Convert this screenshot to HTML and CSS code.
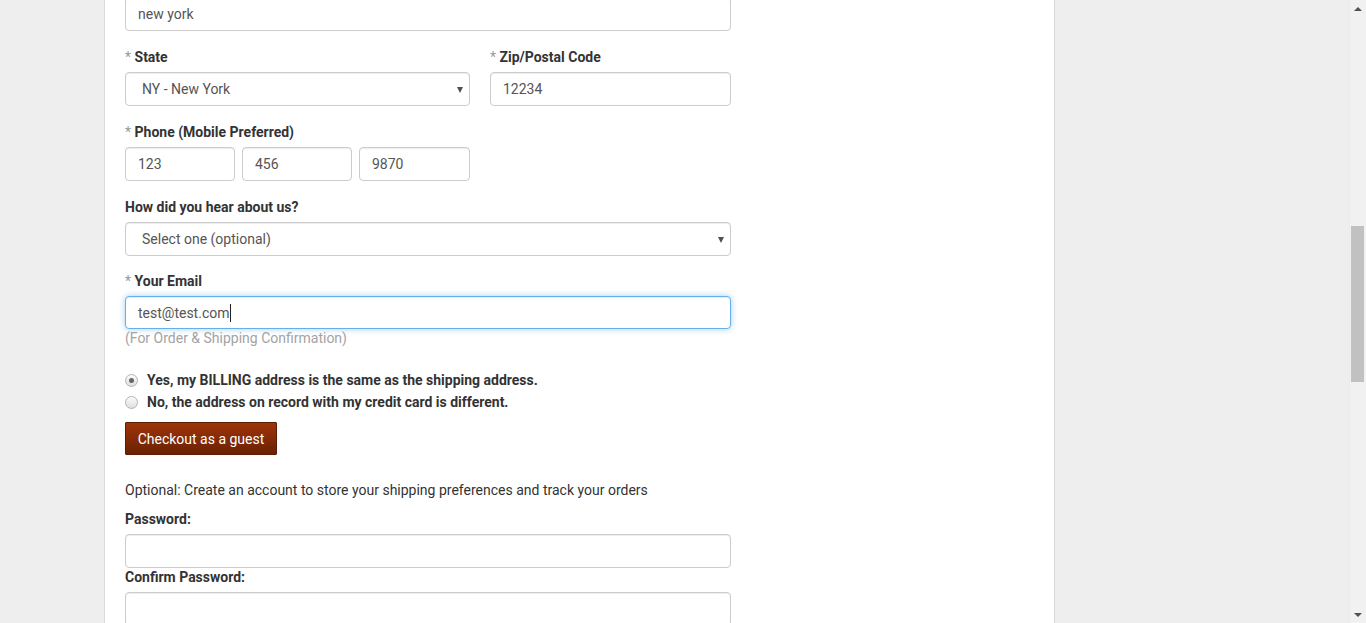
FILE: index.html
```html
<!DOCTYPE html>
<html lang="en">
<head>
<meta charset="utf-8">
<title>Checkout</title>
<link rel="stylesheet" href="styles.css">
</head>
<body>
<div class="viewport">
  <div class="sheet">
    <form class="form">
      <div class="group group-first">
        <input class="field" type="text" value="new york">
      </div>

      <div class="row2">
        <div class="group">
          <label class="label"><span class="req">*</span> State</label>
          <div class="select-wrap">
            <select class="field select"><option>NY - New York</option></select>
          </div>
        </div>
        <div class="group">
          <label class="label"><span class="req">*</span> Zip/Postal Code</label>
          <input class="field" type="text" value="12234">
        </div>
      </div>

      <div class="group">
        <label class="label"><span class="req">*</span> Phone (Mobile Preferred)</label>
        <div class="phone">
          <input class="field" type="text" value="123">
          <input class="field" type="text" value="456">
          <input class="field" type="text" value="9870">
        </div>
      </div>

      <div class="group group-tight">
        <label class="label">How did you hear about us?</label>
        <div class="select-wrap">
          <select class="field select"><option>Select one (optional)</option></select>
        </div>
      </div>

      <div class="group group-email">
        <label class="label"><span class="req">*</span> Your Email</label>
        <div class="field field-focus"><span class="value">test@test.com</span><span class="caret"></span></div>
        <span class="help">(For Order &amp; Shipping Confirmation)</span>
      </div>

      <div class="radios">
        <label class="radio"><input type="radio" name="billing" checked><span>Yes, my BILLING address is the same as the shipping address.</span></label>
        <label class="radio"><input type="radio" name="billing"><span>No, the address on record with my credit card is different.</span></label>
      </div>

      <div class="actions">
        <button type="button" class="btn">Checkout as a guest</button>
      </div>

      <p class="optional">Optional: Create an account to store your shipping preferences and track your orders</p>

      <div class="group group-pw">
        <label class="label">Password:</label>
        <input class="field" type="password">
      </div>
      <div class="group group-pw2">
        <label class="label">Confirm Password:</label>
        <input class="field" type="password">
      </div>
    </form>
  </div>
</div>
<div class="scrollbar">
  <div class="sb-arrow sb-up"></div>
  <div class="sb-track"><div class="sb-thumb"></div></div>
  <div class="sb-arrow sb-down"></div>
</div>
</body>
</html>
```

FILE: styles.css
```css
* { box-sizing: border-box; }

html, body {
  margin: 0;
  height: 623px;
  overflow: hidden;
}

body {
  display: flex;
  background: #eeeeee;
  font-family: Roboto, "Liberation Sans", sans-serif;
  font-size: 14px;
  line-height: 20px;
  color: #333;
}

.viewport {
  flex: 1;
  overflow: hidden;
}

.sheet {
  margin-left: 104px;
  width: 951px;
  height: 700px;
  background: #fff;
  border-left: 1px solid #d9d9d9;
  border-right: 1px solid #d9d9d9;
  padding-left: 20px;
}

.form {
  width: 606px;
  display: flex;
  flex-direction: column;
}

.group {
  display: flex;
  flex-direction: column;
  margin-bottom: 16px;
}

.group-first { margin-top: -3px; }
.group-tight { margin-bottom: 15px; }
.group-email { margin-bottom: 0; }
.group-pw { margin-top: 9px; margin-bottom: 0; }
.group-pw2 { margin-bottom: 0; margin-top: -1px; }

.label {
  font-weight: 700;
  color: #333;
  margin-bottom: 5px;
  line-height: 20px;
}

.req {
  color: #999;
  font-weight: 400;
}

.field {
  display: block;
  width: 100%;
  height: 34px;
  padding: 6px 12px;
  font-family: Roboto, "Liberation Sans", sans-serif;
  font-size: 14px;
  line-height: 20px;
  color: #555;
  background: #fff;
  border: 1px solid #ccc;
  border-radius: 4px;
  box-shadow: inset 0 1px 1px rgba(0, 0, 0, .075);
  outline: none;
  margin: 0;
}

.field-focus {
  display: flex;
  align-items: center;
  height: 33px;
  border-color: #66afe9;
  box-shadow: inset 0 1px 1px rgba(0, 0, 0, .075), 0 0 6px rgba(102, 175, 233, .6);
}

.value { color: #555; }

.caret {
  width: 1px;
  height: 18px;
  background: #222;
  margin-left: 1px;
}

.select-wrap {
  position: relative;
}

.select {
  appearance: none;
  -webkit-appearance: none;
  padding-left: 16px;
}

.select-wrap::after {
  content: "";
  position: absolute;
  right: 7px;
  top: 15px;
  border-left: 3.5px solid transparent;
  border-right: 3.5px solid transparent;
  border-top: 6px solid #505050;
}

.row2 {
  display: grid;
  grid-template-columns: 345px 241px;
  column-gap: 20px;
}

.phone {
  display: grid;
  grid-template-columns: 110px 110px 111px;
  column-gap: 7px;
}

.help {
  display: block;
  color: #a3a3a3;
  line-height: 18px;
}

.radios {
  margin-top: 22px;
  display: flex;
  flex-direction: column;
}

.radio {
  display: flex;
  align-items: center;
  height: 22px;
  font-weight: 700;
  color: #333;
}

.radio input {
  appearance: none;
  -webkit-appearance: none;
  width: 13px;
  height: 13px;
  margin: 0 9px 0 0;
  border-radius: 50%;
  border: 1px solid #b4b4b4;
  background: linear-gradient(#fcfcfc, #dedede);
  position: relative;
}

.radio input:checked::after {
  content: "";
  position: absolute;
  left: 3px;
  top: 3px;
  width: 5px;
  height: 5px;
  border-radius: 50%;
  background: #666;
}

.actions {
  margin-top: 9px;
  display: flex;
}

.btn {
  height: 33px;
  width: 152px;
  padding: 0 6px;
  white-space: nowrap;
  font-family: Roboto, "Liberation Sans", sans-serif;
  font-size: 14px;
  line-height: 20px;
  color: #fff;
  border: 1px solid #5c1d05;
  border-radius: 1px;
  background: linear-gradient(#9e3509, #6a2105);
  cursor: pointer;
}

.optional {
  margin: 25px 0 0;
  line-height: 20px;
  color: #333;
}

.scrollbar {
  width: 17px;
  flex: none;
  display: flex;
  flex-direction: column;
  background: #f1f1f1;
  border-left: 1px solid #ececec;
}

.sb-arrow {
  height: 17px;
  flex: none;
  display: flex;
  justify-content: center;
  align-items: center;
}

.sb-up::before {
  content: "";
  border-left: 4px solid transparent;
  border-right: 4px solid transparent;
  border-bottom: 4px solid #505050;
}

.sb-down::before {
  content: "";
  border-left: 4px solid transparent;
  border-right: 4px solid transparent;
  border-top: 4px solid #505050;
}

.sb-track {
  flex: 1;
  padding-top: 209px;
  padding-left: 1px;
}

.sb-thumb {
  width: 13px;
  height: 156px;
  background: #c1c1c1;
}
```
